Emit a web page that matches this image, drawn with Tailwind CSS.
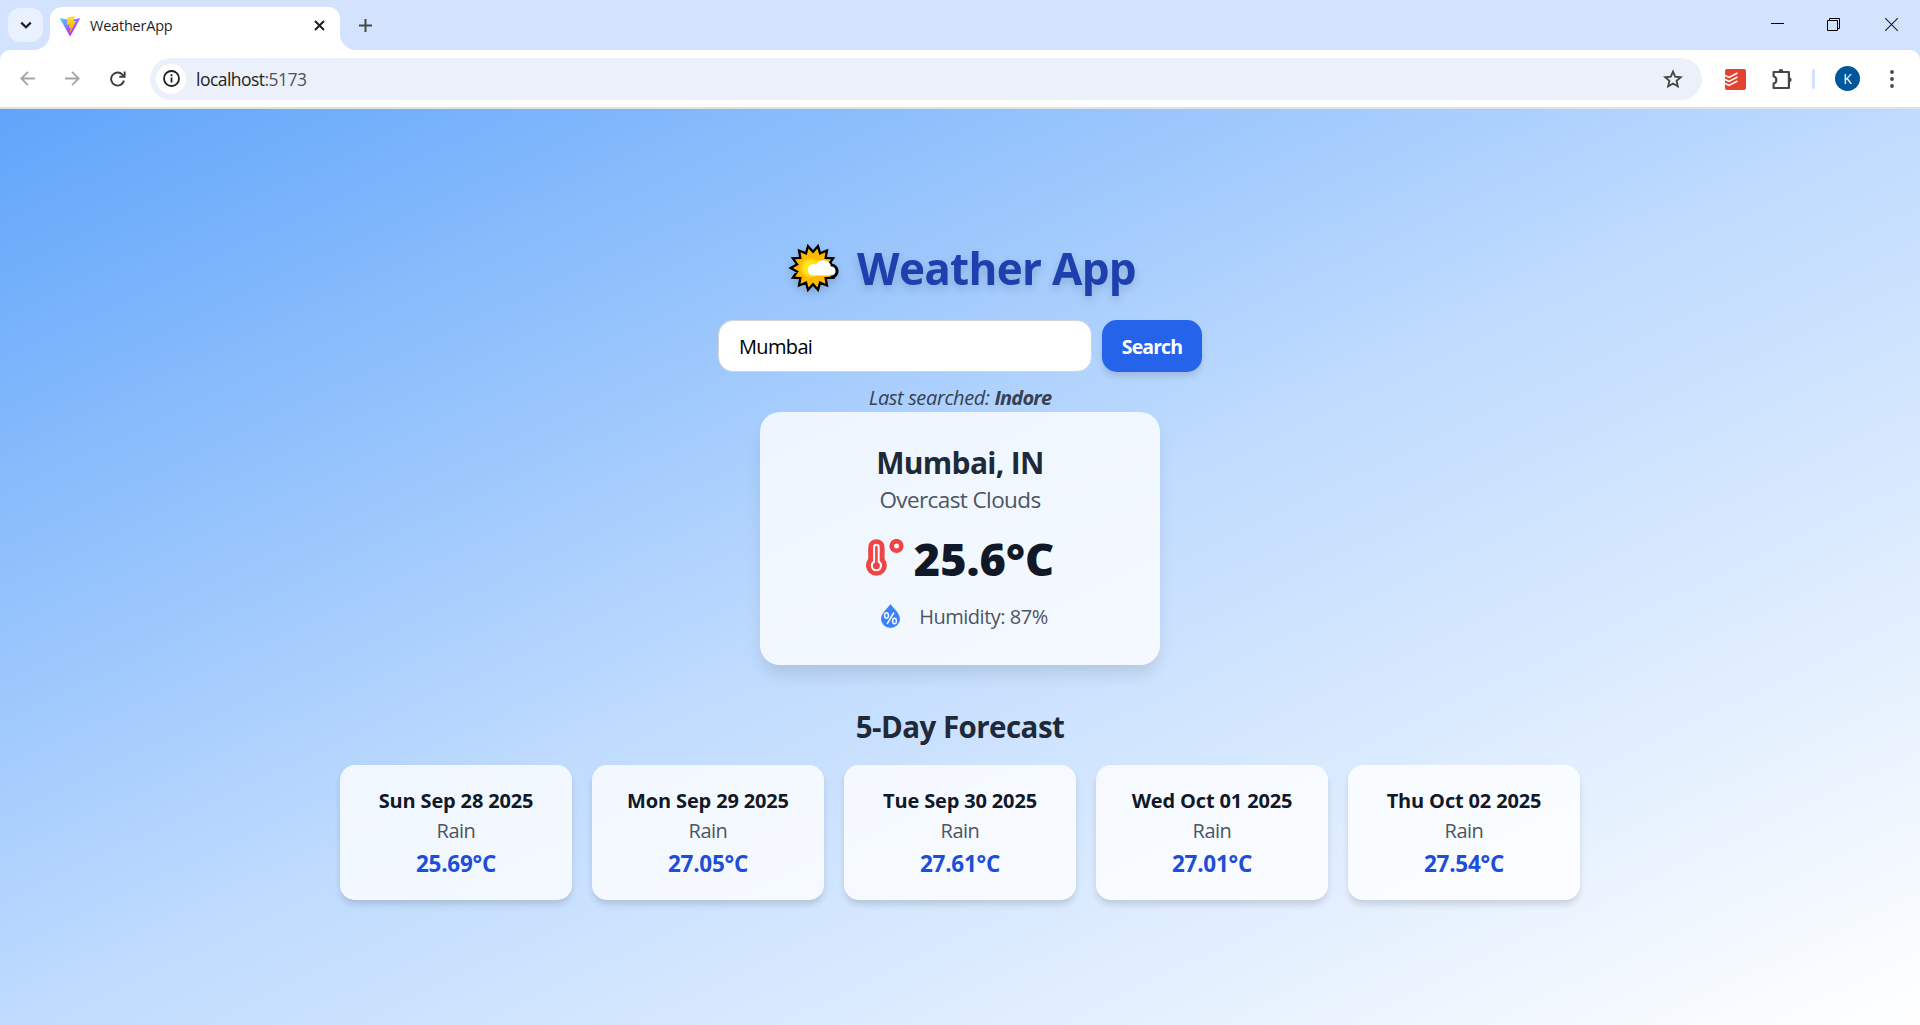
<!DOCTYPE html>
<html lang="en">
<head>
<meta charset="utf-8">
<title>WeatherApp</title>
<script src="https://cdn.jsdelivr.net/npm/@tailwindcss/browser@4"></script>
</head>
<body class="flex h-screen flex-col overflow-hidden bg-white font-['Open_Sans','Noto_Sans',sans-serif]">

<!-- Tab strip -->
<header class="flex h-[50px] shrink-0 justify-between bg-[#d3e3fd]">
  <div class="flex">
    <button class="mt-2 ml-2 flex h-[34px] w-[35px] items-center justify-center rounded-xl bg-[#e9f1fe]">
      <svg class="size-[14px]" viewBox="0 0 14 14" fill="none" stroke="#1f1f1f" stroke-width="2.2"><path d="M2.2 4.6 7 9.3l4.800-4.700"/></svg>
    </button>
    <div class="relative mt-[7px] ml-[7px] flex h-[43px] w-[290px] items-center rounded-t-xl bg-white pb-[3px]">
      <svg class="absolute bottom-0 -left-4 size-4" viewBox="0 0 16 16" fill="#fff"><path d="M16 0v16H0A16 16 0 0 0 16 0Z"/></svg>
      <svg class="absolute -right-4 bottom-0 size-4" viewBox="0 0 16 16" fill="#fff"><path d="M0 0v16h16A16 16 0 0 1 0 0Z"/></svg>
      <svg class="mt-[-3px] ml-[9px] h-[20px] w-[22px]" viewBox="0 0 256 257">
        <defs>
          <linearGradient id="va" x1="-.8%" x2="57.600%" y1="7.700%" y2="78.400%"><stop offset="0%" stop-color="#41D1FF"/><stop offset="100%" stop-color="#BD34FE"/></linearGradient>
          <linearGradient id="vb" x1="43.400%" x2="50.300%" y1="2.200%" y2="89%"><stop offset="0%" stop-color="#FFEA83"/><stop offset="8.300%" stop-color="#FFDD35"/><stop offset="100%" stop-color="#FFA800"/></linearGradient>
        </defs>
        <path fill="url(#va)" d="M255.153 37.938 134.897 252.976c-2.483 4.440-8.862 4.466-11.382.048L.875 37.958c-2.746-4.814 1.371-10.646 6.827-9.670l120.385 21.517a6.537 6.537 0 0 0 2.322-.004l117.867-21.483c5.438-.991 9.574 4.796 6.877 9.620Z"/>
        <path fill="url(#vb)" d="M185.432.063 96.440 17.501a3.268 3.268 0 0 0-2.634 3.014l-5.474 92.456a3.268 3.268 0 0 0 3.997 3.378l24.777-5.718c2.318-.535 4.413 1.507 3.936 3.838l-7.361 36.047c-.495 2.426 1.782 4.500 4.151 3.780l15.304-4.649c2.372-.72 4.652 1.360 4.150 3.788l-11.698 56.621c-.732 3.542 3.979 5.473 5.943 2.437l1.313-2.028 72.516-144.720c1.215-2.423-.88-5.186-3.540-4.672l-25.505 4.922c-2.396.462-4.435-1.770-3.759-4.114l16.646-57.705c.677-2.350-1.370-4.583-3.769-4.113Z"/>
      </svg>
      <span class="mt-[-2px] ml-[9px] text-[14.500px] tracking-[-0.220px] text-[#1f1f1f]">WeatherApp</span>
      <svg class="mt-[-3px] mr-[15px] ml-auto size-[11px]" viewBox="0 0 11 11" fill="none" stroke="#1f1f1f" stroke-width="2"><path d="m1 1 9 9M10 1l-9 9"/></svg>
    </div>
    <svg class="mt-[19px] ml-[19px] size-[13px]" viewBox="0 0 13 13" fill="none" stroke="#474747" stroke-width="2"><path d="M6.500 0v13M0 6.500h13"/></svg>
  </div>
  <div class="flex items-start pr-[22px]">
    <svg class="mt-[18px] size-[13px]" viewBox="0 0 13 13" fill="none" stroke="#000"><path d="M0 5.500h13"/></svg>
    <svg class="mt-[18px] ml-[43px] size-[13px]" viewBox="0 0 13 13" fill="none" stroke="#000"><path d="M.5 2.500h10v10H.5zM2.500 2.500v-2h10v10h-2"/></svg>
    <svg class="mt-[18px] ml-[45px] size-[13px]" viewBox="0 0 13 13" fill="none" stroke="#22262c" stroke-width="1.200"><path d="m0 0 13 13M13 0 0 13"/></svg>
  </div>
</header>

<!-- Toolbar -->
<div class="shrink-0 bg-[#d3e3fd]">
  <div class="flex h-[57px] items-center rounded-t-[10px] bg-white">
    <svg class="ml-[20px] size-[15px]" viewBox="0 0 15 15" fill="none" stroke="#a5a5a5" stroke-width="1.800"><path d="M15 7.500H1.500M8 .8 1.300 7.500 8 14.200"/></svg>
    <svg class="ml-[30px] size-[15px]" viewBox="0 0 15 15" fill="none" stroke="#a5a5a5" stroke-width="1.800"><path d="M0 7.500h13.500M7 .8l6.700 6.700L7 14.200"/></svg>
    <svg class="ml-[30px] size-[16px]" viewBox="0 0 16 16" fill="none" stroke="#3c3c3c" stroke-width="1.900"><path d="M14 9.500A6.500 6.500 0 1 1 12.400 3.600L14.500 5.500"/><path d="M14.600.5v5.300H9.300"/></svg>
    <div class="ml-[24px] flex h-[42px] w-[1552px] items-center rounded-full bg-[#ebf0fa] pl-[6px]">
      <span class="flex size-[30px] items-center justify-center rounded-full bg-white">
        <svg class="size-[17px]" viewBox="0 0 17 17" fill="none" stroke="#1f1f1f" stroke-width="1.800"><circle cx="8.500" cy="8.500" r="7.500"/><path d="M8.500 7.500v5M8.500 4.300v1.900"/></svg>
      </span>
      <span class="mt-[2px] ml-[10px] text-[17.500px] tracking-[-0.530px] text-[#1f1f1f]">localhost<span class="text-[#505357]">:5173</span></span>
      <svg class="mr-[19px] ml-auto size-[20px]" viewBox="0 0 20 20" fill="none" stroke="#474747" stroke-width="1.900"><path d="m10 2.600 2.200 5.100 5.600.5-4.200 3.700 1.200 5.500-4.800-2.900-4.800 2.900 1.200-5.500-4.200-3.700 5.600-.5Z"/></svg>
    </div>
    <svg class="mt-[2px] ml-[23px] size-[21px]" viewBox="0 0 21 21"><rect width="21" height="21" rx="2" fill="#e44332"/><path d="M0 6.500l4 2L12.500 4M0 10.500l4 2L12.500 8M0 14.500l4 2 8.500-4.500" fill="none" stroke="#fff" stroke-width="1.500"/></svg>
    <svg class="ml-[25px] size-[22px]" viewBox="0 0 22 22" fill="none" stroke="#474747" stroke-width="2.200" stroke-linejoin="round"><path d="M2.600 4h15.300v16H2.600v-4.400a3.800 3.800 0 0 0 0-7.300Z"/><path d="M7.500 3.500a2.400 2.400 0 0 1 4.800 0ZM18.300 9.500a2.300 2.300 0 0 1 0 4.700Z" fill="#474747" stroke="none"/></svg>
    <span class="ml-[19px] h-[20px] w-[3px] rounded-full bg-[#d3e3fd]"></span>
    <span class="ml-[20px] flex size-[25px] items-center justify-center rounded-full bg-[#01579b] text-[14px] text-white">K</span>
    <svg class="ml-[30px] h-[18px] w-[4px]" viewBox="0 0 4 18" fill="#474747"><circle cx="2" cy="2" r="1.900"/><circle cx="2" cy="9" r="1.900"/><circle cx="2" cy="16" r="1.900"/></svg>
  </div>
</div>

<!-- Page -->
<main class="flex flex-1 flex-col items-center border-t-2 border-[#dfe1e2] bg-linear-[to_bottom_right,#60a5fa,#bfdbfe,#ffffff] pt-[134px]">
  <h1 class="flex h-[50px] items-center pl-[3px] text-[44px] font-bold text-[#1e40af] drop-shadow-[0_4px_4px_rgba(0,0,0,0.15)]">
    <svg class="size-[52px]" viewBox="-26 -26 52 52">
      <defs>
        <path id="rays" d="M0-14.500 4.450-19.500 6.290-13.060 12.470-15.640 11.340-9.040 18.020-8.680 14.140-3.230 20 0 14.140 3.230 18.020 8.680 11.340 9.040 12.470 15.640 6.290 13.060 4.450 19.500 0 14.500-4.450 19.500-6.290 13.060-12.470 15.640-11.340 9.040-18.020 8.680-14.140 3.230-20 0-14.140-3.230-18.020-8.680-11.340-9.040-12.470-15.640-6.290-13.060-4.450-19.500Z"/>
        <path id="cloud" d="M.5 7.500a5.700 5.700 0 0 1-.2-11.400 5 5 0 0 1 2.700.5 8 8 0 0 1 15 2 4.500 4.500 0 0 1 1 8.900Z"/>
      </defs>
      <g fill="#000" stroke="#000" stroke-width="4.600">
        <use href="#rays"/><path d="M8 5V-5a8 8 0 0 1 10 3.600 4.500 4.500 0 0 1 1 8.900H11Z" stroke-width="6" stroke-linejoin="round"/>
      </g>
      <use href="#rays" fill="#ffb900"/>
      <circle cx="-2.500" r="9.800" fill="#ffd30f"/><circle cx="-2.500" r="7.500" fill="#ffe81a"/>
      <use href="#cloud" fill="#fff"/>
    </svg>
    <span class="ml-[18px] tracking-[-0.700px]">Weather App</span>
  </h1>

  <div class="mt-[27px] flex gap-[10px]">
    <div class="flex h-[52px] w-[374px] items-center rounded-[15px] border border-[#d1d5db] bg-white pt-[2px] pl-[20px] text-[20px] tracking-[-0.650px] text-black">Mumbai</div>
    <button class="h-[52px] w-[100px] rounded-[15px] bg-[#2563eb] pt-[2px] text-[19.500px] font-bold tracking-[-0.900px] text-white shadow-[0_5px_7px_-1px_rgba(0,0,0,0.13)]">Search</button>
  </div>

  <p class="mt-[11px] h-[29px] text-[20px] leading-[30px] tracking-[-0.380px] text-[#374151] italic">Last searched: <span class="font-bold tracking-[-0.800px]">Indore</span></p>

  <section class="flex h-[253px] w-[400px] flex-col items-center rounded-[20px] bg-white/80 pt-[31px] shadow-[0_12px_18px_-4px_rgba(0,0,0,0.12)]">
    <h2 class="text-[30px] leading-[40px] font-bold tracking-[-0.670px] text-[#1f2937]">Mumbai, IN</h2>
    <p class="text-[22.500px] leading-[34px] tracking-[-0.600px] text-[#4b5563]">Overcast Clouds</p>
    <div class="mt-[17px] flex h-[50px] items-center">
      <svg class="mb-[3px] h-[37px] w-[38px]" viewBox="0 0 38 37" fill="none">
        <path d="M2.200 8.400a8.200 8.200 0 0 1 16.400 0v11.500a10.400 10.400 0 1 1-16.400 0Z" fill="#ef4444"/>
        <path d="M7.100 8a3.300 3.300 0 0 1 6.600 0v14a5.700 5.700 0 1 1-6.600 0Z" fill="#f3f8ff"/>
        <circle cx="10.400" cy="26.800" r="3.500" fill="#ef4444"/>
        <path d="M10.400 8.200V26" stroke="#ef4444" stroke-width="2.600" stroke-linecap="round"/>
        <circle cx="30.500" cy="7" r="4.800" stroke="#ef4444" stroke-width="4.600"/>
      </svg>
      <span class="ml-[10px] text-[45px] leading-[50px] font-extrabold text-[#111827]">25.6°C</span>
    </div>
    <div class="mt-[18px] flex h-[30px] items-center pl-[8px]">
      <svg class="mr-[-1px] mb-[2px] ml-[1px] h-[24px] w-[19px]" viewBox="0 0 19 24"><path d="M9.500 0c2.500 4 9.500 9 9.500 15a9.500 9 0 0 1-19 0C0 9 7 4 9.500 0Z" fill="#3b82f6"/><g fill="none" stroke="#f3f8ff" stroke-width="1.500"><ellipse cx="5.500" cy="11.500" rx="1.900" ry="2.700"/><ellipse cx="13.500" cy="17" rx="1.900" ry="2.700"/><path d="M13 8.500 6 20"/></g></svg>
      <span class="ml-[20px] text-[20px] leading-[30px] tracking-[-0.490px] text-[#4b5563]">Humidity: 87%</span>
    </div>
  </section>

  <h3 class="mt-[42px] text-[29.500px] leading-[40px] font-bold tracking-[-0.550px] text-[#1f2937]">5-Day Forecast</h3>

  <section class="mt-[18px] grid w-[1240px] grid-cols-5 gap-[20px] text-center">
    <article class="h-[135px] rounded-[15px] bg-white/80 pt-[21px] shadow-[0_5px_7px_-1px_rgba(0,0,0,0.15)]">
      <p class="text-[20px] leading-[30px] font-bold tracking-[-0.150px] text-[#111827]">Sun Sep 28 2025</p>
      <p class="text-[20px] leading-[30px] tracking-[-0.500px] text-[#4b5563]">Rain</p>
      <p class="text-[22.500px] leading-[35px] font-bold tracking-[-0.250px] text-[#1d4ed8]">25.69°C</p>
    </article>
    <article class="h-[135px] rounded-[15px] bg-white/80 pt-[21px] shadow-[0_5px_7px_-1px_rgba(0,0,0,0.15)]">
      <p class="text-[20px] leading-[30px] font-bold tracking-[-0.150px] text-[#111827]">Mon Sep 29 2025</p>
      <p class="text-[20px] leading-[30px] tracking-[-0.500px] text-[#4b5563]">Rain</p>
      <p class="text-[22.500px] leading-[35px] font-bold tracking-[-0.250px] text-[#1d4ed8]">27.05°C</p>
    </article>
    <article class="h-[135px] rounded-[15px] bg-white/80 pt-[21px] shadow-[0_5px_7px_-1px_rgba(0,0,0,0.15)]">
      <p class="text-[20px] leading-[30px] font-bold tracking-[-0.150px] text-[#111827]">Tue Sep 30 2025</p>
      <p class="text-[20px] leading-[30px] tracking-[-0.500px] text-[#4b5563]">Rain</p>
      <p class="text-[22.500px] leading-[35px] font-bold tracking-[-0.250px] text-[#1d4ed8]">27.61°C</p>
    </article>
    <article class="h-[135px] rounded-[15px] bg-white/80 pt-[21px] shadow-[0_5px_7px_-1px_rgba(0,0,0,0.15)]">
      <p class="text-[20px] leading-[30px] font-bold tracking-[-0.150px] text-[#111827]">Wed Oct 01 2025</p>
      <p class="text-[20px] leading-[30px] tracking-[-0.500px] text-[#4b5563]">Rain</p>
      <p class="text-[22.500px] leading-[35px] font-bold tracking-[-0.250px] text-[#1d4ed8]">27.01°C</p>
    </article>
    <article class="h-[135px] rounded-[15px] bg-white/80 pt-[21px] shadow-[0_5px_7px_-1px_rgba(0,0,0,0.15)]">
      <p class="text-[20px] leading-[30px] font-bold tracking-[-0.150px] text-[#111827]">Thu Oct 02 2025</p>
      <p class="text-[20px] leading-[30px] tracking-[-0.500px] text-[#4b5563]">Rain</p>
      <p class="text-[22.500px] leading-[35px] font-bold tracking-[-0.250px] text-[#1d4ed8]">27.54°C</p>
    </article>
  </section>
</main>
</body>
</html>
